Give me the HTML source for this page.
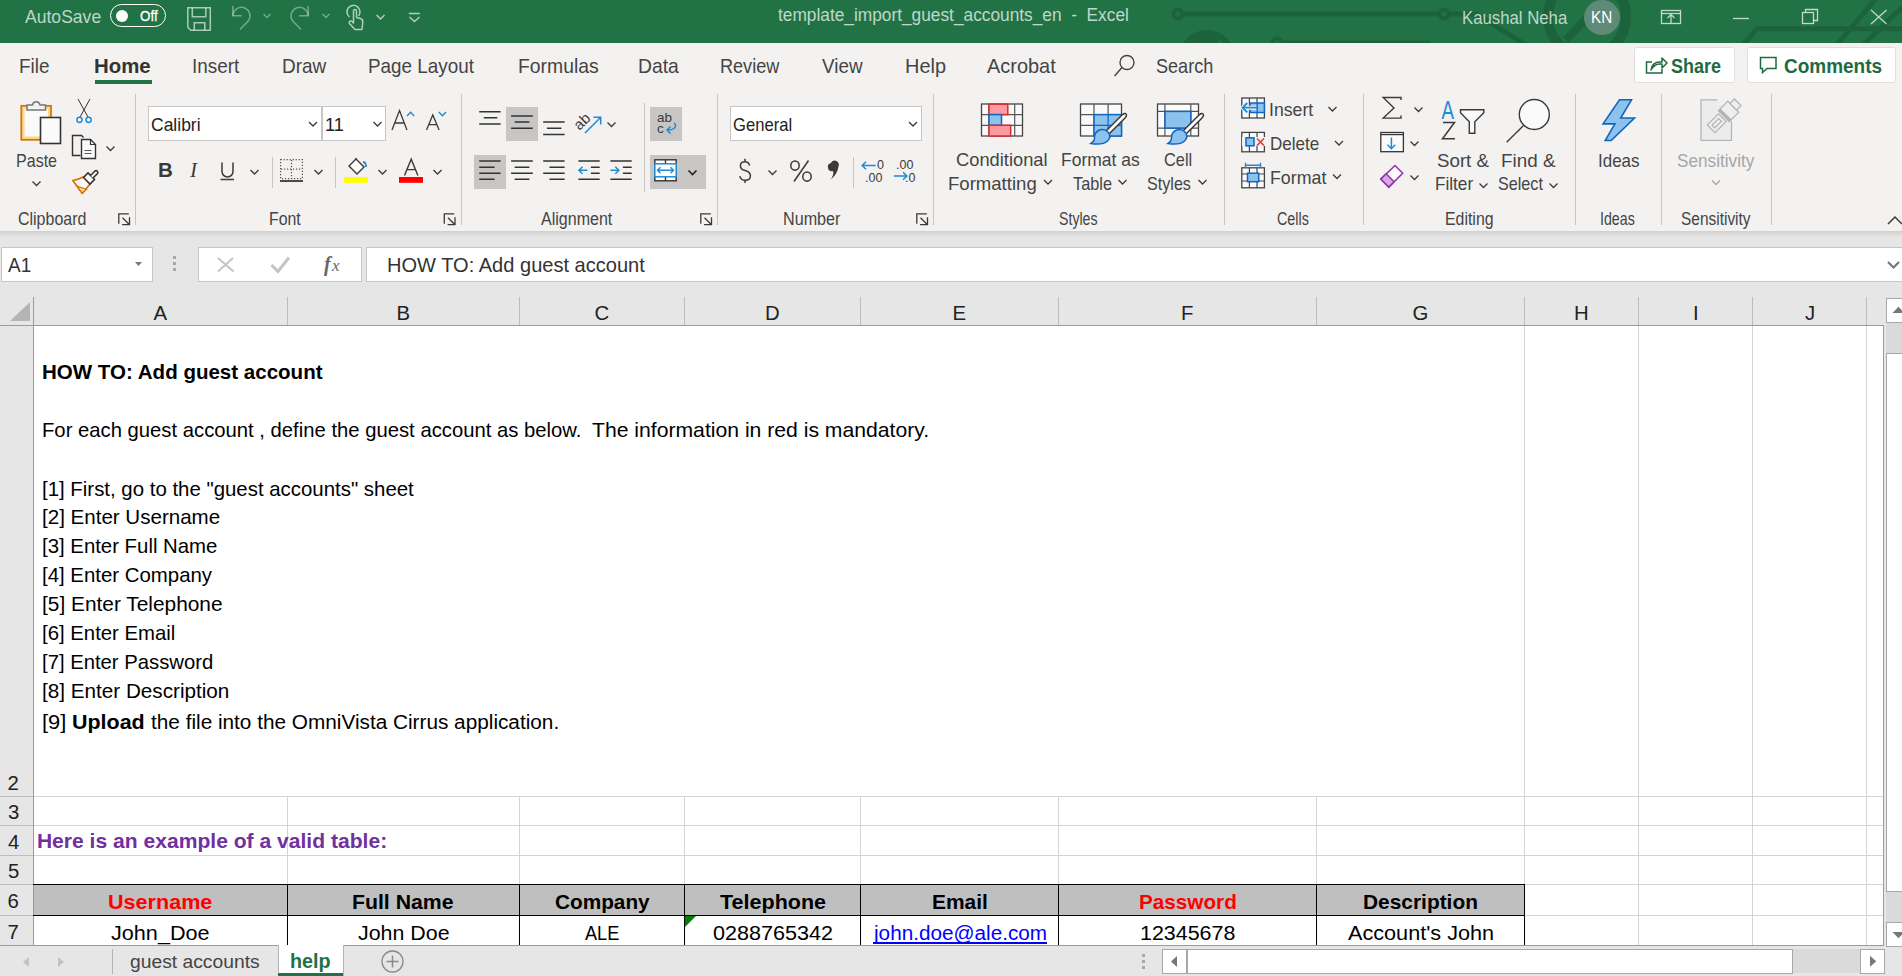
<!DOCTYPE html><html><head><meta charset="utf-8"><style>
html,body{margin:0;padding:0;width:1902px;height:976px;overflow:hidden;background:#fff;position:relative;font-family:"Liberation Sans",sans-serif}
.t{position:absolute;white-space:pre;line-height:1;transform-origin:0 0}
svg{position:absolute;overflow:visible}
</style></head><body>
<div style="position:absolute;left:0px;top:0px;width:1902px;height:43px;background:#217346"></div>
<svg style="left:0;top:0" width="1902" height="43" viewBox="0 0 1902 43">
<g stroke="#1c633c" stroke-width="5" fill="none">
<line x1="1182" y1="14" x2="1440" y2="14"/>
<circle cx="1178" cy="14" r="4.5" stroke-width="4"/>
<circle cx="1444" cy="14" r="4.5" stroke-width="4"/>
<polyline points="1448,14 1476,14 1526,45"/>
<circle cx="1207" cy="58" r="25" stroke-width="6"/>
<rect x="1193" y="36" width="25" height="8" fill="#1c633c" stroke="none"/>
<circle cx="1277" cy="43" r="4.5" stroke-width="4"/>
<line x1="1281" y1="43" x2="1430" y2="43"/>
<circle cx="1587" cy="17" r="39" stroke-width="10"/>
<line x1="1566" y1="40" x2="1602" y2="2" stroke-width="8"/>
<polyline points="1742,46 1757,28.7 1902,28.7"/>
<line x1="1836" y1="46" x2="1878" y2="-4"/>
<line x1="1862" y1="46" x2="1906" y2="4"/>
</g></svg>
<div style="position:absolute;left:110px;top:4px;width:54px;height:21px;border:1.5px solid #fff;border-radius:12px"></div>
<div style="position:absolute;left:116px;top:10px;width:12px;height:12px;background:#fff;border-radius:50%"></div>
<svg style="left:0;top:0" width="430" height="43"><g fill="none" stroke="rgba(255,255,255,0.62)" stroke-width="1.5">
<path d="M187.8 7.8 h22.5 v22.5 h-19.5 l-3 -3 z"/><path d="M192.3 7.8 v9 h13.5 v-9"/><path d="M194.3 30.3 v-7.5 h10.5 v7.5"/>
</g>
<g fill="none" stroke="rgba(255,255,255,0.38)" stroke-width="1.5">
<path d="M240 29.5 L248.6 20.5 A8.5 8.5 0 1 0 233 15.5"/><path d="M232.8 6 v9.8 h9"/><path d="M263.5 14 l3.5 3.5 l3.5-3.5"/>
<path d="M301 29.5 L292.4 20.5 A8.5 8.5 0 1 1 308 15.5"/><path d="M308.2 6 v9.8 h-9"/><path d="M322.5 14 l3.5 3.5 l3.5-3.5"/>
</g>
<g fill="none" stroke="rgba(255,255,255,0.65)" stroke-width="1.5">
<path d="M349.5 17 a6.5 6.5 0 1 1 9 -1"/>
<path d="M355 29.5 l-5.5 -6 a1.6 1.6 0 0 1 2.5 -2 l1.5 1.5 v-12 a1.5 1.5 0 0 1 3 0 v6.5 l4 1 q2.5 0.8 2.3 3.5 l-0.8 7.5 z" stroke-linejoin="round"/>
<path d="M376.5 15 l4 4 l4-4"/>
<path d="M408.8 13.5 h11"/><path d="M409.5 17 l5 4.5 l5-4.5"/>
</g></svg>
<div style="position:absolute;left:1584px;top:0px;width:36px;height:35px;background:#5f8a77;border-radius:50%"></div>
<svg style="left:0;top:0" width="1902" height="43"><g fill="none" stroke="rgba(255,255,255,0.72)" stroke-width="1.3">
<rect x="1661.5" y="10.5" width="19" height="13"/><line x1="1661.5" y1="13.5" x2="1680.5" y2="13.5"/><path d="M1671 23 v-8 M1667.5 18 l3.5-3.5 l3.5 3.5"/>
<line x1="1733" y1="18.5" x2="1749" y2="18.5"/>
<rect x="1802.5" y="12.5" width="11" height="11"/><path d="M1805.5 12.5 v-3 h12 v11 h-4"/>
<path d="M1871 10 l15.5 14 M1886.5 10 l-15.5 14"/>
</g></svg>
<div style="position:absolute;left:0px;top:43px;width:1902px;height:189px;background:#f3f2f1"></div>
<div style="position:absolute;left:95px;top:80px;width:57px;height:4px;background:#217346"></div>
<svg style="left:0;top:0" width="1902" height="90"><g fill="none" stroke="#444" stroke-width="1.4">
<circle cx="1127" cy="62.5" r="7"/><line x1="1122" y1="67.5" x2="1114.5" y2="76"/></g></svg>
<div style="position:absolute;left:1634px;top:47px;width:99px;height:34px;background:#fff;border:1px solid #e1dfdd;border-radius:3px"></div>
<div style="position:absolute;left:1747px;top:47px;width:147px;height:34px;background:#fff;border:1px solid #e1dfdd;border-radius:3px"></div>
<svg style="left:0;top:0" width="1902" height="90"><g fill="none" stroke="#1e6b41" stroke-width="1.5">
<path d="M1652 62 h-5.5 v11 h15.5 v-4"/><path d="M1651 70 q1-8 9-8 h2 v-4 l5 5 l-5 5 v-4 h-2 q-6 0 -9 6 z" stroke-linejoin="round"/>
<path d="M1760.5 57.5 h15.5 v11 h-9 l-4.5 4 v-4 h-2 z"/>
</g></svg>
<div style="position:absolute;left:135.0px;top:94px;width:1.0px;height:131px;background:#c8c6c4"></div>
<div style="position:absolute;left:461.0px;top:94px;width:1.0px;height:131px;background:#c8c6c4"></div>
<div style="position:absolute;left:717.0px;top:94px;width:1.0px;height:131px;background:#c8c6c4"></div>
<div style="position:absolute;left:933.0px;top:94px;width:1.0px;height:131px;background:#c8c6c4"></div>
<div style="position:absolute;left:1224.0px;top:94px;width:1.0px;height:131px;background:#c8c6c4"></div>
<div style="position:absolute;left:1363.0px;top:94px;width:1.0px;height:131px;background:#c8c6c4"></div>
<div style="position:absolute;left:1575.0px;top:94px;width:1.0px;height:131px;background:#c8c6c4"></div>
<div style="position:absolute;left:1661.0px;top:94px;width:1.0px;height:131px;background:#c8c6c4"></div>
<div style="position:absolute;left:1771.0px;top:94px;width:1.0px;height:131px;background:#c8c6c4"></div>
<div style="position:absolute;left:271.5px;top:157px;width:1.0px;height:31px;background:#c8c6c4"></div>
<div style="position:absolute;left:335px;top:157px;width:1px;height:31px;background:#c8c6c4"></div>
<div style="position:absolute;left:643.5px;top:103px;width:1.0px;height:89px;background:#c8c6c4"></div>
<div style="position:absolute;left:853px;top:157px;width:1px;height:31px;background:#c8c6c4"></div>
<div style="position:absolute;left:148px;top:106px;width:172px;height:33px;background:#fff;border:1px solid #c8c6c4"></div>
<div style="position:absolute;left:322px;top:106px;width:62px;height:33px;background:#fff;border:1px solid #c8c6c4"></div>
<div style="position:absolute;left:730px;top:106px;width:190px;height:33px;background:#fff;border:1px solid #c8c6c4"></div>
<div style="position:absolute;left:0px;top:232px;width:1902px;height:65px;background:#e6e6e6"></div>
<div style="position:absolute;left:0px;top:231px;width:1902px;height:6px;background:linear-gradient(#d0d0d0,#e6e6e6)"></div>
<div style="position:absolute;left:1px;top:247px;width:150px;height:33px;background:#fff;border:1px solid #c6c6c6"></div>
<div style="position:absolute;left:198px;top:247px;width:162px;height:33px;background:#fff;border:1px solid #c6c6c6"></div>
<div style="position:absolute;left:366px;top:247px;width:1540px;height:33px;background:#fff;border:1px solid #c6c6c6"></div>
<div style="position:absolute;left:0px;top:297px;width:1884px;height:648px;background:#e6e6e6"></div>
<div style="position:absolute;left:34px;top:326px;width:1849px;height:619px;background:#fff"></div>
<div style="position:absolute;left:33px;top:297px;width:1px;height:28px;background:#bdbdbd"></div>
<div style="position:absolute;left:287px;top:297px;width:1px;height:28px;background:#bdbdbd"></div>
<div style="position:absolute;left:519px;top:297px;width:1px;height:28px;background:#bdbdbd"></div>
<div style="position:absolute;left:684px;top:297px;width:1px;height:28px;background:#bdbdbd"></div>
<div style="position:absolute;left:860px;top:297px;width:1px;height:28px;background:#bdbdbd"></div>
<div style="position:absolute;left:1058px;top:297px;width:1px;height:28px;background:#bdbdbd"></div>
<div style="position:absolute;left:1316px;top:297px;width:1px;height:28px;background:#bdbdbd"></div>
<div style="position:absolute;left:1524px;top:297px;width:1px;height:28px;background:#bdbdbd"></div>
<div style="position:absolute;left:1638px;top:297px;width:1px;height:28px;background:#bdbdbd"></div>
<div style="position:absolute;left:1752px;top:297px;width:1px;height:28px;background:#bdbdbd"></div>
<div style="position:absolute;left:1866px;top:297px;width:1px;height:28px;background:#bdbdbd"></div>
<div style="position:absolute;left:0px;top:325px;width:1884px;height:1px;background:#9b9b9b"></div>
<div style="position:absolute;left:33px;top:297px;width:1px;height:648px;background:#9b9b9b"></div>
<div style="position:absolute;left:1883px;top:325px;width:1px;height:621px;background:#9b9b9b"></div>
<div style="position:absolute;left:287px;top:796px;width:1px;height:149px;background:#d4d4d4"></div>
<div style="position:absolute;left:519px;top:796px;width:1px;height:149px;background:#d4d4d4"></div>
<div style="position:absolute;left:684px;top:796px;width:1px;height:149px;background:#d4d4d4"></div>
<div style="position:absolute;left:860px;top:796px;width:1px;height:149px;background:#d4d4d4"></div>
<div style="position:absolute;left:1058px;top:796px;width:1px;height:149px;background:#d4d4d4"></div>
<div style="position:absolute;left:1316px;top:796px;width:1px;height:149px;background:#d4d4d4"></div>
<div style="position:absolute;left:1524px;top:326px;width:1px;height:619px;background:#d4d4d4"></div>
<div style="position:absolute;left:1638px;top:326px;width:1px;height:619px;background:#d4d4d4"></div>
<div style="position:absolute;left:1752px;top:326px;width:1px;height:619px;background:#d4d4d4"></div>
<div style="position:absolute;left:1866px;top:326px;width:1px;height:619px;background:#d4d4d4"></div>
<div style="position:absolute;left:34px;top:796px;width:1849px;height:1px;background:#d4d4d4"></div>
<div style="position:absolute;left:34px;top:825px;width:1849px;height:1px;background:#d4d4d4"></div>
<div style="position:absolute;left:34px;top:855px;width:1849px;height:1px;background:#d4d4d4"></div>
<div style="position:absolute;left:34px;top:884px;width:1849px;height:1px;background:#d4d4d4"></div>
<div style="position:absolute;left:34px;top:915px;width:1849px;height:1px;background:#d4d4d4"></div>
<div style="position:absolute;left:0px;top:796px;width:33px;height:1px;background:#bdbdbd"></div>
<div style="position:absolute;left:0px;top:825px;width:33px;height:1px;background:#bdbdbd"></div>
<div style="position:absolute;left:0px;top:855px;width:33px;height:1px;background:#bdbdbd"></div>
<div style="position:absolute;left:0px;top:884px;width:33px;height:1px;background:#bdbdbd"></div>
<div style="position:absolute;left:0px;top:915px;width:33px;height:1px;background:#bdbdbd"></div>
<div style="position:absolute;left:0px;top:945px;width:33px;height:1px;background:#bdbdbd"></div>
<div style="position:absolute;left:0px;top:945px;width:1884px;height:1px;background:#9b9b9b"></div>
<svg style="left:0;top:0" width="40" height="330"><path d="M30 302 L30 321 L10 321 Z" fill="#b4b4b4"/></svg>
<div style="position:absolute;left:34px;top:884px;width:1490px;height:31px;background:#bfbfbf"></div>
<div style="position:absolute;left:33px;top:884px;width:1492px;height:1.2999999999999545px;background:#000"></div>
<div style="position:absolute;left:33px;top:914.8px;width:1492px;height:1.2000000000000455px;background:#000"></div>
<div style="position:absolute;left:287px;top:884px;width:1.1999999999999886px;height:61px;background:#000"></div>
<div style="position:absolute;left:519px;top:884px;width:1.2000000000000455px;height:61px;background:#000"></div>
<div style="position:absolute;left:684px;top:884px;width:1.2000000000000455px;height:61px;background:#000"></div>
<div style="position:absolute;left:860px;top:884px;width:1.2000000000000455px;height:61px;background:#000"></div>
<div style="position:absolute;left:1058px;top:884px;width:1.2000000000000455px;height:61px;background:#000"></div>
<div style="position:absolute;left:1316px;top:884px;width:1.2000000000000455px;height:61px;background:#000"></div>
<div style="position:absolute;left:1524px;top:884px;width:1.2000000000000455px;height:61px;background:#000"></div>
<svg style="left:0;top:0" width="700" height="940"><path d="M685 916 h11 L685 927 Z" fill="#0a7a0a"/></svg>
<div style="position:absolute;left:873px;top:942px;width:174px;height:1.5px;background:#0000ff"></div>
<div style="position:absolute;left:0px;top:946px;width:1902px;height:30px;background:#e6e6e6"></div>
<div style="position:absolute;left:278px;top:945px;width:64px;height:31px;background:#fff;border-left:1px solid #b4b4b4;border-right:1px solid #b4b4b4"></div>
<div style="position:absolute;left:278px;top:973px;width:65px;height:3px;background:#217346"></div>
<div style="position:absolute;left:112px;top:949px;width:1px;height:25px;background:#b4b4b4"></div>
<svg style="left:0;top:940" width="420" height="36"><g>
<path d="M29 17 l-6 5 l6 5 z" fill="#c2c2c2"/><path d="M58 17 l6 5 l-6 5 z" fill="#c2c2c2"/>
<circle cx="392.5" cy="21.5" r="10.5" fill="none" stroke="#8a8a8a" stroke-width="1.3"/>
<path d="M392.5 15.5 v12 M386.5 21.5 h12" stroke="#8a8a8a" stroke-width="1.5"/>
</g></svg>
<div style="position:absolute;left:1142px;top:954px;width:3px;height:3px;background:#a8a8a8"></div>
<div style="position:absolute;left:1142px;top:960px;width:3px;height:3px;background:#a8a8a8"></div>
<div style="position:absolute;left:1142px;top:966px;width:3px;height:3px;background:#a8a8a8"></div>
<div style="position:absolute;left:1162px;top:949px;width:698px;height:24px;background:#dadada"></div>
<div style="position:absolute;left:1162px;top:949px;width:23px;height:23px;background:#fff;border:1px solid #a8a8a8"></div>
<div style="position:absolute;left:1187px;top:949px;width:604px;height:23px;background:#fff;border:1px solid #a8a8a8"></div>
<div style="position:absolute;left:1860px;top:949px;width:23px;height:23px;background:#fff;border:1px solid #a8a8a8"></div>
<div style="position:absolute;left:1884px;top:297px;width:18px;height:649px;background:#e6e6e6"></div>
<div style="position:absolute;left:1886px;top:323px;width:16px;height:599px;background:#dadada"></div>
<div style="position:absolute;left:1886px;top:298px;width:20px;height:23px;background:#fff;border:1px solid #a8a8a8"></div>
<div style="position:absolute;left:1886px;top:353px;width:20px;height:537px;background:#fff;border:1px solid #a8a8a8"></div>
<div style="position:absolute;left:1886px;top:922px;width:20px;height:23px;background:#fff;border:1px solid #a8a8a8"></div>
<svg style="left:0;top:0" width="1902" height="976"><g fill="#777">
<path d="M1177 956 l-6 5.5 l6 5.5 z"/><path d="M1870 955.8 l6.2 5.5 l-6.2 5.5 z"/>
<path d="M1892.5 313 l6-6.2 l6 6.2 z"/><path d="M1892.5 932 l6 6.2 l6-6.2 z"/>
</g></svg>
<svg style="left:0;top:0" width="1902" height="300"><g>
<path d="M135 262 h7 l-3.5 4 z" fill="#777"/>
<rect x="173" y="256" width="3" height="3" fill="#a8a8a8"/><rect x="173" y="262" width="3" height="3" fill="#a8a8a8"/><rect x="173" y="268" width="3" height="3" fill="#a8a8a8"/>
<path d="M218 258 l15.5 13.5 M233 258 l-15 13.5" stroke="#c4c4c4" stroke-width="2" fill="none"/>
<path d="M271.5 265 l6.5 6.5 l11 -14" stroke="#c4c4c4" stroke-width="3" fill="none"/>
<text x="324" y="271" font-family="Liberation Serif" font-style="italic" font-weight="700" font-size="20" fill="#666">f</text>
<text x="332" y="271" font-family="Liberation Serif" font-style="italic" font-size="17" fill="#666">x</text>
<path d="M1888 262 l5.5 5.5 l5.5 -5.5" stroke="#777" stroke-width="2.2" fill="none"/>
</g></svg>
<svg style="left:0;top:0" width="1902" height="232" viewBox="0 0 1902 232">
<defs></defs>
<g fill="none" stroke="#3b3a39" stroke-width="1.3" stroke-linecap="butt">
<!-- chevrons -->
<path d="M32.5 181.5 l4 4 l4-4"/>
<path d="M106.5 146.5 l4 4 l4-4"/>
<path d="M309 122 l4 4 l4-4"/>
<path d="M373.5 122 l4 4 l4-4"/>
<path d="M250.5 170 l4 4 l4-4"/>
<path d="M314.5 170 l4 4 l4-4"/>
<path d="M378.5 170 l4 4 l4-4"/>
<path d="M433.5 170 l4 4 l4-4"/>
<path d="M607.5 122.5 l4 4 l4-4"/>
<path d="M768.5 170.5 l4 4 l4-4"/>
<path d="M909 122 l4 4 l4-4"/>
<path d="M1044 180 l4 4 l4-4"/>
<path d="M1118.5 180 l4 4 l4-4"/>
<path d="M1198.5 180 l4 4 l4-4"/>
<path d="M1328.5 107 l4 4 l4-4"/>
<path d="M1335 141 l4 4 l4-4"/>
<path d="M1333 174.5 l4 4 l4-4"/>
<path d="M1414.5 107.5 l4 4 l4-4"/>
<path d="M1410.5 141.5 l4 4 l4-4"/>
<path d="M1410.5 175.5 l4 4 l4-4"/>
<path d="M1479.5 183.5 l4 4 l4-4"/>
<path d="M1549.5 183.5 l4 4 l4-4"/>
<path d="M1712 180.5 l4 4 l4-4" stroke="#a6a6a6"/>
<path d="M1888 224 l7 -7 l7 7" stroke-width="1.5"/>
<!-- launchers -->
<path d="M118.8 223.7 v-9.8 h10"/><path d="M122.5 217.7 l7 7 M129.5 217.3 v7.4 h-7.4"/>
<path d="M444.3 223.7 v-9.8 h10"/><path d="M448 217.7 l7 7 M455 217.3 v7.4 h-7.4"/>
<path d="M700.8 223.7 v-9.8 h10"/><path d="M704.5 217.7 l7 7 M711.5 217.3 v7.4 h-7.4"/>
<path d="M916.8 223.7 v-9.8 h10"/><path d="M920.5 217.7 l7 7 M927.5 217.3 v7.4 h-7.4"/>
</g>
<!-- Paste -->
<rect x="21.3" y="105.8" width="29.7" height="34" fill="#f9d98b" stroke="#d86f00" stroke-width="1.7"/>
<rect x="24.5" y="109" width="23.5" height="27.5" fill="#fafafa"/>
<path d="M27 110 v-5 h5.5 a3.8 3.8 0 0 1 7.5 0 h5.5 v5 z" fill="#f3f2f1" stroke="#777" stroke-width="1.5"/>
<rect x="40.5" y="117.5" width="20" height="26" fill="#fafafa" stroke="#333" stroke-width="1.6"/>
<!-- cut -->
<g fill="none" stroke="#333" stroke-width="1"><path d="M78 99 l10 18 M90 99 l-10 18"/></g>
<g fill="none" stroke="#1e8bd4" stroke-width="1.5"><circle cx="79.5" cy="119.8" r="2.6"/><circle cx="88.6" cy="119.8" r="2.6"/></g>
<!-- copy -->
<path d="M80.5 155.5 h-8 v-20 h9 l2 2" fill="none" stroke="#333" stroke-width="1.4"/>
<path d="M81.5 139.5 h9 l5 5 v14 h-14 z" fill="#fafafa" stroke="#333" stroke-width="1.4"/>
<path d="M90.5 139.5 v5 h5" fill="none" stroke="#333" stroke-width="1.2"/>
<path d="M84.5 150.5 h7 M84.5 153.5 h7" stroke="#555" stroke-width="1"/>
<!-- format painter -->
<path d="M72.8 180.5 q6 -1 11.5 -4 l6.5 6.5 q-4 5 -8.5 10.5 z" fill="#fafafa" stroke="#d86f00" stroke-width="1.6" stroke-linejoin="round"/>
<path d="M77 186 l9.5 3.5 l-4.5 3.5 z" fill="#f9d98b" stroke="#d86f00" stroke-width="1.2"/>
<path d="M83.5 177.5 l4.5 -4.5 l6.5 6.5 l-4.5 4.5 z" fill="#fafafa" stroke="#333" stroke-width="1.6"/>
<path d="M90.5 175.5 l4.5 -4.5 a1.8 1.8 0 0 1 2.5 2.5 l-4.5 4.5" fill="#fafafa" stroke="#333" stroke-width="1.6"/>
<!-- grow/shrink font -->
<g fill="none" stroke="#3b3a39" stroke-width="1.3">
<path d="M392 130 l7.5 -19.5 l7.5 19.5 M394.7 123 h9.6"/>
<path d="M426.5 130 l6.3 -15 l6.3 15 M428.7 124.7 h8.2"/>
</g>
<g fill="none" stroke="#1e8bd4" stroke-width="1.4"><path d="M407 116 l3.6 -3.8 l3.6 3.8"/><path d="M438.8 112 l3.6 3.8 l3.6 -3.8"/></g>
<!-- B I U -->
<text x="158" y="177" font-family="Liberation Sans" font-weight="700" font-size="20.5" fill="#3b3a39">B</text>
<text x="190" y="177" font-family="Liberation Serif" font-style="italic" font-size="21" fill="#3b3a39">I</text>
<path d="M222 162.5 v9 a5.5 5.5 0 0 0 11 0 v-9" fill="none" stroke="#3b3a39" stroke-width="1.5"/>
<path d="M220.5 179.5 h13.5" stroke="#3b3a39" stroke-width="1.5"/>
<!-- borders -->
<g stroke="#555" stroke-width="1.2" stroke-dasharray="1.2 1.8" fill="none">
<rect x="280.6" y="159.6" width="21.8" height="19"/><path d="M291.5 160 v19 M281 169.2 h21"/></g>
<path d="M280 181 h23" stroke="#222" stroke-width="1.6"/>
<!-- fill color -->
<path d="M349 166 l7 -7 l8 8 l-7 7 z" fill="#fafafa" stroke="#3b3a39" stroke-width="1.4"/>
<path d="M356 159 v-1" stroke="#3b3a39" stroke-width="1.4"/>
<path d="M363 162 q3 0 3 5" fill="none" stroke="#1e8bd4" stroke-width="1.8"/>
<rect x="344" y="177" width="24" height="5.8" fill="#ffff00"/>
<!-- font color -->
<path d="M404.5 175.5 l6.7 -16.3 l6.7 16.3 M406.9 169.6 h8.6" fill="none" stroke="#3b3a39" stroke-width="1.4"/>
<rect x="399" y="177" width="24" height="5.8" fill="#ff0000"/>
<!-- alignment highlights -->
<rect x="506" y="107" width="32" height="34" fill="#c8c6c4"/>
<rect x="650" y="107" width="32" height="34" fill="#c8c6c4"/>
<rect x="474" y="155" width="32" height="34" fill="#c8c6c4"/>
<rect x="650" y="155" width="56" height="34" fill="#c8c6c4"/>
<g stroke="#333" stroke-width="1.5">
<path d="M479.2 111.8 h21.4 M483.8 117.7 h13.5 M479.2 123.9 h21.4"/>
<path d="M511.1 116 h21.7 M514.7 122.1 h14.7 M511.1 128.3 h21.7"/>
<path d="M543.2 122.1 h21.4 M546.9 128.3 h14.5 M543.2 134.4 h21.4"/>
<path d="M479.2 161.1 h21.4 M479.2 167.3 h15.4 M479.2 173.2 h21.4 M479.2 179.3 h15.4"/>
<path d="M511.1 161.1 h21.7 M514.7 167.3 h14.7 M511.1 173.2 h21.7 M514.7 179.3 h14.7"/>
<path d="M543.2 161.1 h21.4 M549.5 167.3 h15.1 M543.2 173.2 h21.4 M549.5 179.3 h15.1"/>
<path d="M578.4 161.1 h21.3 M590.9 167.3 h8.8 M590.9 173.2 h8.8 M578.4 179.3 h21.3"/>
<path d="M610.4 161.1 h21.3 M622.9 167.3 h8.8 M622.9 173.2 h8.8 M610.4 179.3 h21.3"/>
</g>
<g stroke="#1e8bd4" stroke-width="1.5" fill="none">
<path d="M587.4 170.2 h-8.5 M582.5 166.7 l-3.6 3.5 l3.6 3.5"/>
<path d="M610.4 170.2 h8.5 M615.3 166.7 l3.6 3.5 l-3.6 3.5"/>
<path d="M585 133 l15.5 -15.5 M593.5 117.3 h7.2 v7.2"/>
</g>
<text transform="translate(579.5 131) rotate(-45)" font-family="Liberation Sans" font-size="15" fill="#3b3a39">ab</text>
<!-- wrap text -->
<text x="657" y="121.5" font-family="Liberation Sans" font-size="13.5" fill="#3b3a39">ab</text>
<text x="657" y="133" font-family="Liberation Sans" font-size="13.5" fill="#3b3a39">c</text>
<path d="M674 123 q3 2 0 5.5 q-2 1.5 -6.5 1.5 M670.5 126.5 l-3.5 3.5 l3.5 3.5" fill="none" stroke="#1e8bd4" stroke-width="1.5"/>
<!-- merge -->
<rect x="654.8" y="159.8" width="21.4" height="21" fill="#fff" stroke="#333" stroke-width="1.4"/>
<path d="M665.5 160 v21" stroke="#333" stroke-width="1.4"/>
<rect x="654.8" y="163.8" width="21.4" height="13" fill="#fff" stroke="#1e8bd4" stroke-width="1.5"/>
<path d="M657.5 170.3 h16 M660.5 167.3 l-3 3 l3 3 M670.5 167.3 l3 3 l-3 3" fill="none" stroke="#1e8bd4" stroke-width="1.4"/>
<path d="M688.5 170.5 l4 4 l4-4" fill="none" stroke="#222" stroke-width="1.6"/>
<!-- number -->
<path d="M749.6 165.5 q-0.8 -3.8 -4.6 -3.8 q-4.6 0 -4.6 4.2 q0 3.2 4.8 4.6 q5.2 1.5 5.2 5.2 q0 4.6 -5.2 4.6 q-4.4 0 -5.4 -4.2 M745 158.8 v2.8 M745 180.4 v2.5" fill="none" stroke="#3b3a39" stroke-width="1.5"/>
<g fill="none" stroke="#3b3a39" stroke-width="1.5"><ellipse cx="795" cy="165.6" rx="4.2" ry="4.6"/><ellipse cx="807" cy="176.6" rx="4.2" ry="4.6"/><path d="M808.5 160.5 L794 181.5"/></g>
<path d="M831 163 a4 4 0 1 1 7.5 3.5 q-1 8 -8.5 13.5 q4.5 -5 3 -9 a4 4 0 0 1 -2 -8 z" fill="#3b3a39"/>
<g font-family="Liberation Sans" font-size="12.5" fill="#3b3a39">
<text x="877" y="168.8">0</text><text x="865" y="181.5">.00</text>
<text x="896" y="168.8">.00</text><text x="905" y="181.5">.0</text>
</g>
<g stroke="#1e8bd4" stroke-width="1.5" fill="none">
<path d="M875.7 165.5 h-13.5 M866 161.7 l-3.8 3.8 l3.8 3.8"/>
<path d="M893.9 176 h13 M903.1 172.2 l3.8 3.8 l-3.8 3.8"/>
</g>
<!-- conditional formatting -->
<g fill="#fafafa" stroke="#444" stroke-width="1.3">
<rect x="981.5" y="104" width="41" height="32"/><rect x="1080.5" y="104" width="41" height="32"/><rect x="1157.5" y="104" width="41" height="32"/>
</g>
<g stroke="#555" stroke-width="1.2">
<path d="M981.5 114.6 h41 M981.5 125.3 h41 M988.9 104 v32 M1014.7 104 v32"/>
<path d="M1080.5 114.6 h41 M1080.5 125.3 h41 M1094 104 v32 M1108.1 104 v32"/>
<path d="M1157.5 111.4 h41 M1157.5 128.1 h41 M1164.9 104 v32 M1190.8 104 v32"/>
</g>
<rect x="989" y="104.2" width="18.8" height="10.4" fill="#ff9aa2" stroke="#d62d2d" stroke-width="1.5"/>
<rect x="989" y="114.6" width="12.5" height="10.7" fill="#8cc3ee" stroke="#1065c0" stroke-width="1.5"/>
<rect x="989" y="125.3" width="21.7" height="10.7" fill="#ff9aa2" stroke="#d62d2d" stroke-width="1.5"/>
<rect x="1094" y="114.6" width="27.5" height="21.4" fill="#8cc3ee" stroke="#1065c0" stroke-width="1.5"/>
<path d="M1108.1 114.6 v21 M1094 125.3 h27.5" stroke="#1065c0" stroke-width="1.2"/>
<rect x="1165" y="111.4" width="25.8" height="16.7" fill="#8cc3ee" stroke="#1065c0" stroke-width="1.5"/>
<g>
<path d="M1105.5 131.5 l16.5 -16.5 q3 -2.5 4 -1 q1.5 1 -1 4 l-16.5 16.5 z" fill="#fafafa" stroke="#333" stroke-width="1.4"/>
<path d="M1098.5 130.5 q5.5 -2.5 9.5 1.5 q4 4.5 -0.5 9 q-5 4.5 -16.5 2.5 q4 -2.5 3.5 -6.5 q0 -4 4 -6.5 z" fill="#8cc3ee" stroke="#1065c0" stroke-width="1.5"/>
<path d="M1182.5 131.5 l16.5 -16.5 q3 -2.5 4 -1 q1.5 1 -1 4 l-16.5 16.5 z" fill="#fafafa" stroke="#333" stroke-width="1.4"/>
<path d="M1175.5 130.5 q5.5 -2.5 9.5 1.5 q4 4.5 -0.5 9 q-5 4.5 -16.5 2.5 q4 -2.5 3.5 -6.5 q0 -4 4 -6.5 z" fill="#8cc3ee" stroke="#1065c0" stroke-width="1.5"/>
</g>
<!-- cells icons -->
<g fill="#fafafa" stroke="#444" stroke-width="1.3">
<rect x="1241.8" y="98" width="22.6" height="20"/><rect x="1241.8" y="132.4" width="22.6" height="19.4"/><rect x="1241.8" y="167.8" width="22.6" height="20"/>
</g>
<g stroke="#444" stroke-width="1.2">
<path d="M1249.4 98 v20 M1257 98 v20"/>
<path d="M1249.4 132.4 v19.4 M1257 132.4 v19.4"/>
<path d="M1249.4 167.8 v20 M1257 167.8 v20 M1241.8 174 h22.6 M1241.8 181 h22.6"/>
</g>
<rect x="1250" y="103" width="14.4" height="9.5" fill="#8cc3ee" stroke="#1065c0" stroke-width="1.5"/>
<path d="M1257 107.7 h-14.5 M1247.3 103 l-4.7 4.7 l4.7 4.7" fill="none" stroke="#f3f2f1" stroke-width="4"/><path d="M1257 107.7 h-14.5 M1247.3 103 l-4.7 4.7 l4.7 4.7" fill="none" stroke="#1e8bd4" stroke-width="1.8"/><path d="M1257.2 103 v9.5" stroke="#1065c0" stroke-width="1.3"/>
<rect x="1242" y="137" width="24" height="9" fill="#f3f2f1"/>
<rect x="1246" y="137.8" width="8" height="8" fill="#8cc3ee" stroke="#1065c0" stroke-width="1.5"/>
<path d="M1257 138.5 l7 7 M1264 138.5 l-7 7" stroke="#e8383d" stroke-width="1.6"/>
<rect x="1247.5" y="173.2" width="11.2" height="8.5" fill="#8cc3ee" stroke="#1065c0" stroke-width="1.5"/>
<path d="M1245.5 165.3 h15 M1245.5 162.8 v5 M1260.5 162.8 v5" stroke="#1e8bd4" stroke-width="1.4"/>
<!-- editing -->
<path d="M1401 100 v-2.5 h-17.8 l10.8 10.4 l-10.8 10.2 h17.8 v-2.5" fill="none" stroke="#3b3a39" stroke-width="1.4"/>
<rect x="1380.8" y="132.5" width="22.6" height="19.2" fill="#fafafa" stroke="#333" stroke-width="1.3"/>
<path d="M1381 134.6 h22" stroke="#333" stroke-width="1.2"/>
<path d="M1391.4 137.6 v11 M1387.5 144.8 l3.9 3.9 l3.9 -3.9" fill="none" stroke="#1e8bd4" stroke-width="1.5"/>
<path d="M1395 165.5 l7.7 7.7 l-13.9 13.9 l-8 -8 z" fill="#fafafa" stroke="#8e35a8" stroke-width="1.5"/>
<path d="M1380.8 179.1 l5.3 -5.3 l8 8 l-5.3 5.3 z" fill="#d9a6e8" stroke="#8e35a8" stroke-width="1.5"/>
<text x="1441.5" y="118.8" font-family="Liberation Sans" font-size="25" fill="#1e8bd4" transform="translate(1441.5 0) scale(0.75 1) translate(-1441.5 0)">A</text>
<path d="M1443 122.5 h11.5 l-12 16.3 h12.5" fill="none" stroke="#3b3a39" stroke-width="1.5"/>
<path d="M1460.5 109.8 h23.3 v3 l-9 9 v11.5 h-5.5 v-11.5 l-8.8 -9 z" fill="#fafafa" stroke="#3b3a39" stroke-width="1.4"/>
<circle cx="1534.3" cy="114.5" r="15" fill="#fafafa" stroke="#3b3a39" stroke-width="1.4"/>
<path d="M1523.5 125.5 l-16.8 16.8" stroke="#3b3a39" stroke-width="1.4"/>
<!-- ideas -->
<path d="M1619.5 99.8 h12 l-10.8 18.2 h13.8 l-23.3 22.5 h-6 l9.7 -16.6 h-11.8 z" fill="#8cc3ee" stroke="#1065c0" stroke-width="1.6" stroke-linejoin="miter"/>
<!-- sensitivity -->
<path d="M1717.5 99.8 h-16.5 v40.5 h30.5 v-19" fill="#ececec" stroke="#b4b4b4" stroke-width="1.3"/>
<g transform="translate(1725 115) scale(0.78) rotate(-45) translate(-1722 -117)" fill="#efefef" stroke="#b4b4b4" stroke-width="1.6">
<rect x="1697" y="110" width="20" height="14"/>
<rect x="1701" y="114.5" width="12" height="5" fill="none"/>
<rect x="1719" y="106.5" width="4" height="21" fill="#b4b4b4" stroke="none"/>
<rect x="1723" y="107" width="14" height="20"/>
<rect x="1737" y="111" width="8" height="12"/>
</g>
</svg>
<div class="t" id="t0" style="left:25.0px;top:7.71px;font-size:18.31px;font-weight:400;color:rgba(255,255,255,0.72);font-family:'Liberation Sans',sans-serif;transform:scaleX(0.9600);">AutoSave</div>
<div class="t" id="t1" style="left:139.5px;top:8.60px;font-size:14.54px;font-weight:400;color:#fff;font-family:'Liberation Sans',sans-serif;transform:scaleX(0.9214);-webkit-text-stroke:0.3px #fff;">Off</div>
<div class="t" id="t2" style="left:778.0px;top:7.41px;font-size:17.44px;font-weight:400;color:rgba(255,255,255,0.72);font-family:'Liberation Sans',sans-serif;transform:scaleX(0.9917);">template_import_guest_accounts_en&nbsp;&nbsp;-&nbsp;&nbsp;Excel</div>
<div class="t" id="t3" style="left:1461.5px;top:8.81px;font-size:18.90px;font-weight:400;color:rgba(255,255,255,0.72);font-family:'Liberation Sans',sans-serif;transform:scaleX(0.8869);">Kaushal Neha</div>
<div class="t" id="t4" style="left:1591.1px;top:9.00px;font-size:16.28px;font-weight:400;color:#fff;font-family:'Liberation Sans',sans-serif;transform:scaleX(0.9401);">KN</div>
<div class="t" id="t5" style="left:18.8px;top:56.11px;font-size:20.93px;font-weight:400;color:#444;font-family:'Liberation Sans',sans-serif;transform:scaleX(0.9010);">File</div>
<div class="t" id="t6" style="left:94.4px;top:56.11px;font-size:20.93px;font-weight:700;color:#333;font-family:'Liberation Sans',sans-serif;transform:scaleX(0.9736);">Home</div>
<div class="t" id="t7" style="left:191.8px;top:56.11px;font-size:20.93px;font-weight:400;color:#444;font-family:'Liberation Sans',sans-serif;transform:scaleX(0.9027);">Insert</div>
<div class="t" id="t8" style="left:281.7px;top:56.11px;font-size:20.93px;font-weight:400;color:#444;font-family:'Liberation Sans',sans-serif;transform:scaleX(0.9074);">Draw</div>
<div class="t" id="t9" style="left:368.4px;top:56.11px;font-size:20.93px;font-weight:400;color:#444;font-family:'Liberation Sans',sans-serif;transform:scaleX(0.9016);">Page Layout</div>
<div class="t" id="t10" style="left:517.5px;top:56.11px;font-size:20.93px;font-weight:400;color:#444;font-family:'Liberation Sans',sans-serif;transform:scaleX(0.9262);">Formulas</div>
<div class="t" id="t11" style="left:638.4px;top:56.11px;font-size:20.93px;font-weight:400;color:#444;font-family:'Liberation Sans',sans-serif;transform:scaleX(0.9229);">Data</div>
<div class="t" id="t12" style="left:719.9px;top:56.11px;font-size:20.93px;font-weight:400;color:#444;font-family:'Liberation Sans',sans-serif;transform:scaleX(0.8644);">Review</div>
<div class="t" id="t13" style="left:822.0px;top:56.11px;font-size:20.93px;font-weight:400;color:#444;font-family:'Liberation Sans',sans-serif;transform:scaleX(0.9006);">View</div>
<div class="t" id="t14" style="left:904.6px;top:56.11px;font-size:20.93px;font-weight:400;color:#444;font-family:'Liberation Sans',sans-serif;transform:scaleX(0.9519);">Help</div>
<div class="t" id="t15" style="left:986.6px;top:56.30px;font-size:20.93px;font-weight:400;color:#444;font-family:'Liberation Sans',sans-serif;transform:scaleX(0.9531);">Acrobat</div>
<div class="t" id="t16" style="left:1155.7px;top:56.30px;font-size:20.93px;font-weight:400;color:#444;font-family:'Liberation Sans',sans-serif;transform:scaleX(0.8636);">Search</div>
<div class="t" id="t17" style="left:1670.9px;top:55.91px;font-size:20.64px;font-weight:700;color:#1e6b41;font-family:'Liberation Sans',sans-serif;transform:scaleX(0.8707);">Share</div>
<div class="t" id="t18" style="left:1783.7px;top:55.91px;font-size:20.64px;font-weight:700;color:#1e6b41;font-family:'Liberation Sans',sans-serif;transform:scaleX(0.9198);">Comments</div>
<div class="t" id="t19" style="left:15.9px;top:151.50px;font-size:18.31px;font-weight:400;color:#444;font-family:'Liberation Sans',sans-serif;transform:scaleX(0.8770);">Paste</div>
<div class="t" id="t20" style="left:18.0px;top:211.11px;font-size:17.44px;font-weight:400;color:#444;font-family:'Liberation Sans',sans-serif;transform:scaleX(0.9156);">Clipboard</div>
<div class="t" id="t21" style="left:269.1px;top:211.00px;font-size:17.44px;font-weight:400;color:#444;font-family:'Liberation Sans',sans-serif;transform:scaleX(0.9105);">Font</div>
<div class="t" id="t22" style="left:541.3px;top:211.00px;font-size:17.44px;font-weight:400;color:#444;font-family:'Liberation Sans',sans-serif;transform:scaleX(0.9190);">Alignment</div>
<div class="t" id="t23" style="left:783.4px;top:211.00px;font-size:17.44px;font-weight:400;color:#444;font-family:'Liberation Sans',sans-serif;transform:scaleX(0.9263);">Number</div>
<div class="t" id="t24" style="left:1058.5px;top:211.00px;font-size:17.44px;font-weight:400;color:#444;font-family:'Liberation Sans',sans-serif;transform:scaleX(0.8123);">Styles</div>
<div class="t" id="t25" style="left:1277.2px;top:211.00px;font-size:17.44px;font-weight:400;color:#444;font-family:'Liberation Sans',sans-serif;transform:scaleX(0.8223);">Cells</div>
<div class="t" id="t26" style="left:1444.6px;top:210.61px;font-size:17.44px;font-weight:400;color:#444;font-family:'Liberation Sans',sans-serif;transform:scaleX(0.9105);">Editing</div>
<div class="t" id="t27" style="left:1600.0px;top:210.61px;font-size:17.44px;font-weight:400;color:#444;font-family:'Liberation Sans',sans-serif;transform:scaleX(0.8155);">Ideas</div>
<div class="t" id="t28" style="left:1680.6px;top:210.61px;font-size:17.44px;font-weight:400;color:#444;font-family:'Liberation Sans',sans-serif;transform:scaleX(0.8861);">Sensitivity</div>
<div class="t" id="t29" style="left:151.2px;top:116.21px;font-size:18.60px;font-weight:400;color:#222;font-family:'Liberation Sans',sans-serif;transform:scaleX(0.9406);">Calibri</div>
<div class="t" id="t30" style="left:325.0px;top:116.21px;font-size:18.60px;font-weight:400;color:#222;font-family:'Liberation Sans',sans-serif;transform:scaleX(0.9744);">11</div>
<div class="t" id="t31" style="left:733.3px;top:116.21px;font-size:18.60px;font-weight:400;color:#222;font-family:'Liberation Sans',sans-serif;transform:scaleX(0.8936);">General</div>
<div class="t" id="t32" style="left:956.0px;top:151.00px;font-size:18.31px;font-weight:400;color:#444;font-family:'Liberation Sans',sans-serif;">Conditional</div>
<div class="t" id="t33" style="left:948.3px;top:174.50px;font-size:18.31px;font-weight:400;color:#444;font-family:'Liberation Sans',sans-serif;transform:scaleX(1.0144);">Formatting</div>
<div class="t" id="t34" style="left:1060.7px;top:151.00px;font-size:18.31px;font-weight:400;color:#444;font-family:'Liberation Sans',sans-serif;transform:scaleX(0.9556);">Format as</div>
<div class="t" id="t35" style="left:1072.8px;top:174.50px;font-size:18.31px;font-weight:400;color:#444;font-family:'Liberation Sans',sans-serif;transform:scaleX(0.8906);">Table</div>
<div class="t" id="t36" style="left:1164.2px;top:151.00px;font-size:18.31px;font-weight:400;color:#444;font-family:'Liberation Sans',sans-serif;transform:scaleX(0.8931);">Cell</div>
<div class="t" id="t37" style="left:1147.4px;top:174.50px;font-size:18.31px;font-weight:400;color:#444;font-family:'Liberation Sans',sans-serif;transform:scaleX(0.8817);">Styles</div>
<div class="t" id="t38" style="left:1268.8px;top:101.41px;font-size:18.31px;font-weight:400;color:#444;font-family:'Liberation Sans',sans-serif;transform:scaleX(0.9669);">Insert</div>
<div class="t" id="t39" style="left:1269.6px;top:134.71px;font-size:18.31px;font-weight:400;color:#444;font-family:'Liberation Sans',sans-serif;transform:scaleX(0.9321);">Delete</div>
<div class="t" id="t40" style="left:1269.5px;top:168.80px;font-size:18.31px;font-weight:400;color:#444;font-family:'Liberation Sans',sans-serif;transform:scaleX(0.9725);">Format</div>
<div class="t" id="t41" style="left:1437.0px;top:151.80px;font-size:18.31px;font-weight:400;color:#444;font-family:'Liberation Sans',sans-serif;transform:scaleX(1.0229);">Sort &amp;</div>
<div class="t" id="t42" style="left:1434.6px;top:175.41px;font-size:18.31px;font-weight:400;color:#444;font-family:'Liberation Sans',sans-serif;transform:scaleX(0.9377);">Filter</div>
<div class="t" id="t43" style="left:1501.0px;top:151.80px;font-size:18.31px;font-weight:400;color:#444;font-family:'Liberation Sans',sans-serif;transform:scaleX(1.0295);">Find &amp;</div>
<div class="t" id="t44" style="left:1497.6px;top:175.41px;font-size:18.31px;font-weight:400;color:#444;font-family:'Liberation Sans',sans-serif;transform:scaleX(0.8824);">Select</div>
<div class="t" id="t45" style="left:1597.9px;top:151.80px;font-size:18.31px;font-weight:400;color:#444;font-family:'Liberation Sans',sans-serif;transform:scaleX(0.9287);">Ideas</div>
<div class="t" id="t46" style="left:1677.2px;top:151.80px;font-size:18.31px;font-weight:400;color:#a6a6a6;font-family:'Liberation Sans',sans-serif;transform:scaleX(0.9385);">Sensitivity</div>
<div class="t" id="t47" style="left:8.2px;top:255.01px;font-size:20.64px;font-weight:400;color:#333;font-family:'Liberation Sans',sans-serif;transform:scaleX(0.9210);">A1</div>
<div class="t" id="t48" style="left:387.3px;top:255.31px;font-size:20.20px;font-weight:400;color:#333;font-family:'Liberation Sans',sans-serif;transform:scaleX(0.9933);">HOW TO: Add guest account</div>
<div class="t" id="t49" style="left:153.5px;top:303.01px;font-size:20.35px;font-weight:400;color:#222;font-family:'Liberation Sans',sans-serif;">A</div>
<div class="t" id="t50" style="left:396.5px;top:303.01px;font-size:20.35px;font-weight:400;color:#222;font-family:'Liberation Sans',sans-serif;">B</div>
<div class="t" id="t51" style="left:594.5px;top:303.01px;font-size:20.35px;font-weight:400;color:#222;font-family:'Liberation Sans',sans-serif;">C</div>
<div class="t" id="t52" style="left:765.0px;top:303.01px;font-size:20.35px;font-weight:400;color:#222;font-family:'Liberation Sans',sans-serif;">D</div>
<div class="t" id="t53" style="left:952.5px;top:303.01px;font-size:20.35px;font-weight:400;color:#222;font-family:'Liberation Sans',sans-serif;">E</div>
<div class="t" id="t54" style="left:1181.0px;top:303.01px;font-size:20.35px;font-weight:400;color:#222;font-family:'Liberation Sans',sans-serif;">F</div>
<div class="t" id="t55" style="left:1412.5px;top:303.01px;font-size:20.35px;font-weight:400;color:#222;font-family:'Liberation Sans',sans-serif;">G</div>
<div class="t" id="t56" style="left:1574.0px;top:303.01px;font-size:20.35px;font-weight:400;color:#222;font-family:'Liberation Sans',sans-serif;">H</div>
<div class="t" id="t57" style="left:1693.0px;top:303.01px;font-size:20.35px;font-weight:400;color:#222;font-family:'Liberation Sans',sans-serif;">I</div>
<div class="t" id="t58" style="left:1805.0px;top:303.01px;font-size:20.35px;font-weight:400;color:#222;font-family:'Liberation Sans',sans-serif;">J</div>
<div class="t" id="t59" style="left:7.5px;top:773.01px;font-size:20.35px;font-weight:400;color:#222;font-family:'Liberation Sans',sans-serif;">2</div>
<div class="t" id="t60" style="left:8.0px;top:802.01px;font-size:20.35px;font-weight:400;color:#222;font-family:'Liberation Sans',sans-serif;">3</div>
<div class="t" id="t61" style="left:8.0px;top:831.51px;font-size:20.35px;font-weight:400;color:#222;font-family:'Liberation Sans',sans-serif;">4</div>
<div class="t" id="t62" style="left:8.0px;top:861.01px;font-size:20.35px;font-weight:400;color:#222;font-family:'Liberation Sans',sans-serif;">5</div>
<div class="t" id="t63" style="left:7.5px;top:891.01px;font-size:20.35px;font-weight:400;color:#222;font-family:'Liberation Sans',sans-serif;">6</div>
<div class="t" id="t64" style="left:7.5px;top:921.81px;font-size:20.35px;font-weight:400;color:#222;font-family:'Liberation Sans',sans-serif;">7</div>
<div class="t" id="t65" style="left:42.4px;top:361.00px;font-size:21.08px;font-weight:700;color:#000;font-family:'Liberation Sans',sans-serif;transform:scaleX(0.9738);">HOW TO: Add guest account</div>
<div class="t" id="t66" style="left:42.4px;top:421.01px;font-size:19.48px;font-weight:400;color:#000;font-family:'Liberation Sans',sans-serif;transform:scaleX(1.0405);">For each guest account , define the guest account as below.</div>
<div class="t" id="t67" style="left:592.0px;top:421.01px;font-size:19.48px;font-weight:400;color:#000;font-family:'Liberation Sans',sans-serif;transform:scaleX(1.0868);">The information in red is mandatory.</div>
<div class="t" id="t68" style="left:42.3px;top:479.51px;font-size:19.48px;font-weight:400;color:#000;font-family:'Liberation Sans',sans-serif;transform:scaleX(1.0480);">[1] First, go to the "guest accounts" sheet</div>
<div class="t" id="t69" style="left:42.2px;top:508.01px;font-size:19.48px;font-weight:400;color:#000;font-family:'Liberation Sans',sans-serif;transform:scaleX(1.0553);">[2] Enter Username</div>
<div class="t" id="t70" style="left:42.3px;top:537.01px;font-size:19.48px;font-weight:400;color:#000;font-family:'Liberation Sans',sans-serif;transform:scaleX(1.0459);">[3] Enter Full Name</div>
<div class="t" id="t71" style="left:42.3px;top:566.01px;font-size:19.48px;font-weight:400;color:#000;font-family:'Liberation Sans',sans-serif;transform:scaleX(1.0477);">[4] Enter Company</div>
<div class="t" id="t72" style="left:42.2px;top:595.01px;font-size:19.48px;font-weight:400;color:#000;font-family:'Liberation Sans',sans-serif;transform:scaleX(1.0717);">[5] Enter Telephone</div>
<div class="t" id="t73" style="left:42.3px;top:624.01px;font-size:19.48px;font-weight:400;color:#000;font-family:'Liberation Sans',sans-serif;transform:scaleX(1.0447);">[6] Enter Email</div>
<div class="t" id="t74" style="left:42.3px;top:652.71px;font-size:19.48px;font-weight:400;color:#000;font-family:'Liberation Sans',sans-serif;transform:scaleX(1.0409);">[7] Enter Password</div>
<div class="t" id="t75" style="left:42.2px;top:681.71px;font-size:19.48px;font-weight:400;color:#000;font-family:'Liberation Sans',sans-serif;transform:scaleX(1.0622);">[8] Enter Description</div>
<div class="t" id="t76" style="left:41.9px;top:712.50px;font-size:19.77px;font-weight:400;color:#000;font-family:'Liberation Sans',sans-serif;transform:scaleX(1.1082);">[9]</div>
<div class="t" id="t77" style="left:72.3px;top:711.51px;font-size:20.64px;font-weight:700;color:#000;font-family:'Liberation Sans',sans-serif;transform:scaleX(1.0396);">Upload</div>
<div class="t" id="t78" style="left:150.8px;top:712.50px;font-size:19.77px;font-weight:400;color:#000;font-family:'Liberation Sans',sans-serif;transform:scaleX(1.0505);">the file into the OmniVista Cirrus application.</div>
<div class="t" id="t79" style="left:36.9px;top:830.31px;font-size:21.08px;font-weight:700;color:#7030a0;font-family:'Liberation Sans',sans-serif;">Here is an example of a valid table:</div>
<div class="t" id="t80" style="left:108.3px;top:892.21px;font-size:20.64px;font-weight:700;color:#ff0000;font-family:'Liberation Sans',sans-serif;transform:scaleX(1.0461);">Username</div>
<div class="t" id="t81" style="left:352.4px;top:892.21px;font-size:20.64px;font-weight:700;color:#000;font-family:'Liberation Sans',sans-serif;transform:scaleX(1.0299);">Full Name</div>
<div class="t" id="t82" style="left:554.8px;top:892.21px;font-size:20.64px;font-weight:700;color:#000;font-family:'Liberation Sans',sans-serif;transform:scaleX(1.0074);">Company</div>
<div class="t" id="t83" style="left:719.7px;top:892.21px;font-size:20.64px;font-weight:700;color:#000;font-family:'Liberation Sans',sans-serif;transform:scaleX(1.0442);">Telephone</div>
<div class="t" id="t84" style="left:931.8px;top:892.21px;font-size:20.64px;font-weight:700;color:#000;font-family:'Liberation Sans',sans-serif;transform:scaleX(1.0151);">Email</div>
<div class="t" id="t85" style="left:1138.8px;top:892.21px;font-size:20.64px;font-weight:700;color:#ff0000;font-family:'Liberation Sans',sans-serif;transform:scaleX(1.0038);">Password</div>
<div class="t" id="t86" style="left:1362.7px;top:892.21px;font-size:20.64px;font-weight:700;color:#000;font-family:'Liberation Sans',sans-serif;transform:scaleX(1.0129);">Description</div>
<div class="t" id="t87" style="left:111.0px;top:924.20px;font-size:19.77px;font-weight:400;color:#000;font-family:'Liberation Sans',sans-serif;transform:scaleX(1.0941);">John_Doe</div>
<div class="t" id="t88" style="left:357.6px;top:924.20px;font-size:19.77px;font-weight:400;color:#000;font-family:'Liberation Sans',sans-serif;transform:scaleX(1.0825);">John Doe</div>
<div class="t" id="t89" style="left:584.8px;top:924.20px;font-size:19.77px;font-weight:400;color:#000;font-family:'Liberation Sans',sans-serif;transform:scaleX(0.9173);">ALE</div>
<div class="t" id="t90" style="left:713.1px;top:924.20px;font-size:19.77px;font-weight:400;color:#000;font-family:'Liberation Sans',sans-serif;transform:scaleX(1.0906);">0288765342</div>
<div class="t" id="t91" style="left:1139.9px;top:924.20px;font-size:19.77px;font-weight:400;color:#000;font-family:'Liberation Sans',sans-serif;transform:scaleX(1.0845);">12345678</div>
<div class="t" id="t92" style="left:1347.5px;top:924.20px;font-size:19.77px;font-weight:400;color:#000;font-family:'Liberation Sans',sans-serif;transform:scaleX(1.0949);">Account's John</div>
<div class="t" id="t93" style="left:873.8px;top:924.20px;font-size:19.77px;font-weight:400;color:#0000ff;font-family:'Liberation Sans',sans-serif;transform:scaleX(1.0486);">john.doe@ale.com</div>
<div class="t" id="t94" style="left:130.2px;top:952.61px;font-size:18.90px;font-weight:400;color:#444;font-family:'Liberation Sans',sans-serif;transform:scaleX(1.0203);">guest accounts</div>
<div class="t" id="t95" style="left:290.0px;top:951.61px;font-size:19.77px;font-weight:700;color:#217346;font-family:'Liberation Sans',sans-serif;">help</div>
</body></html>
